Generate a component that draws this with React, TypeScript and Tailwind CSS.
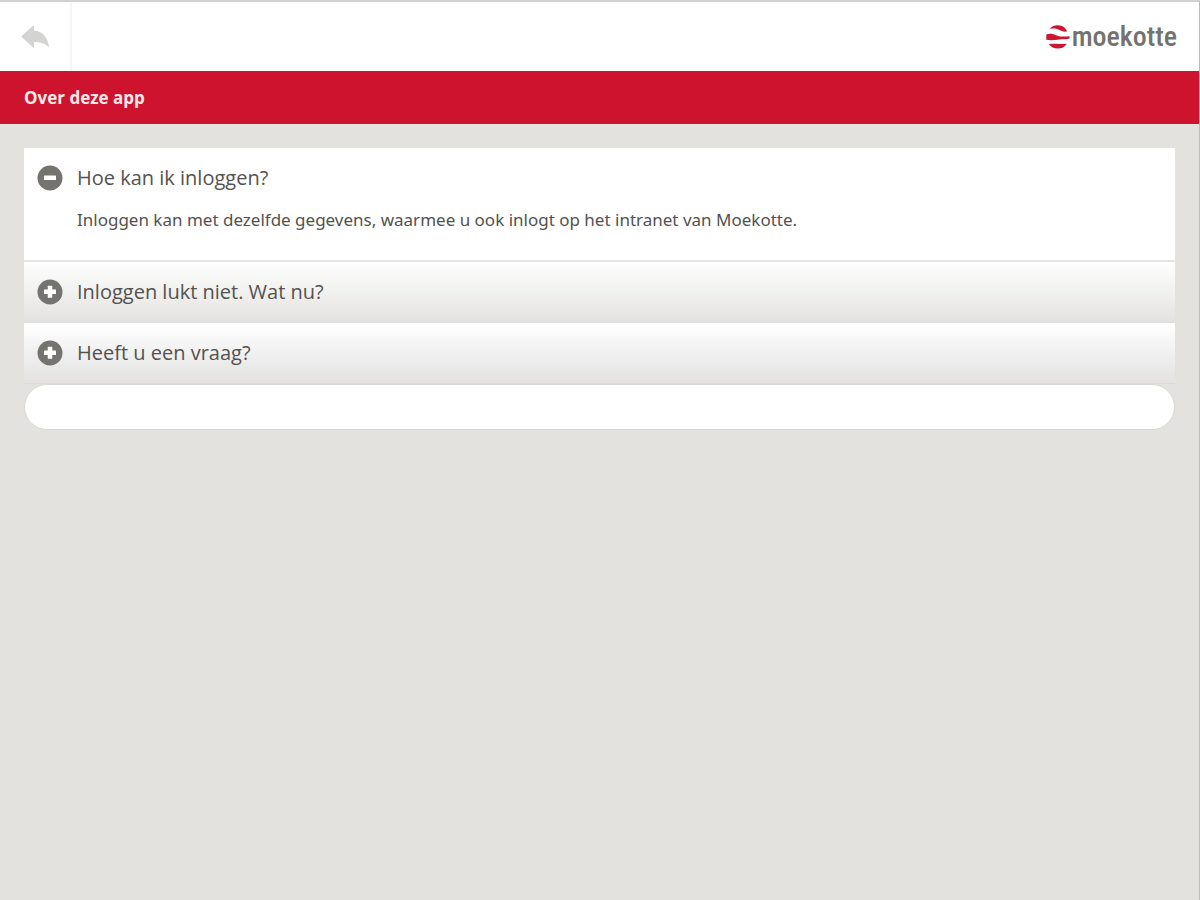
import { useState } from 'react';

const questions = [
  {
    id: 'inloggen',
    title: 'Hoe kan ik inloggen?',
    answer: 'Inloggen kan met dezelfde gegevens, waarmee u ook inlogt op het intranet van Moekotte.',
  },
  {
    id: 'lukt-niet',
    title: 'Inloggen lukt niet. Wat nu?',
    answer: 'Controleer uw gebruikersnaam en wachtwoord en probeer het opnieuw.',
  },
  {
    id: 'vraag',
    title: 'Heeft u een vraag?',
    answer: 'Neem dan contact op met Moekotte.',
  },
];

function BackIcon() {
  return (
    <svg width="28" height="24" viewBox="0 0 28 24" fill="#d3d4d1" aria-hidden="true">
      <path d="M0 11.500 13 0v5.500C21 6 27 12 28 22.500 24.500 18.500 19.500 17 13 17v6z" />
    </svg>
  );
}

function ToggleIcon({ open }: { open: boolean }) {
  return (
    <svg width="26" height="26" viewBox="0 0 26 26" className="shrink-0" aria-hidden="true">
      <circle cx="13" cy="13" r="12.500" fill="#757370" />
      <rect x="7" y="10.500" width="12" height="4.500" rx="0.500" fill="#fff" />
      {!open && <rect x="10.750" y="6.750" width="4.500" height="12" rx="0.500" fill="#fff" />}
    </svg>
  );
}

function Logo() {
  return (
    <a href="#home" className="flex items-center gap-0.5" aria-label="moekotte">
      <svg width="24" height="24" viewBox="0 0 24 24" fill="#cd1430" aria-hidden="true">
        <path d="M3.500 3.800C6 1.200 9 .2 12 .3c4.500.2 7.800 2.400 9 6.200-3 .5-5.500-.3-8-1.700-2.500-1.300-5.500-1.700-9.500-1z" />
        <path d="M.3 9.500C3 8.300 7 8.500 10 10.300c3 1.500 7 1.500 13.500.9v2.600c-4 .6-7 .4-10 .7-5 .6-9 .9-13.200.3z" />
        <path d="M2.800 19.300c3-.6 6-.6 9-.4 3 .2 6 .2 9-.2-2 3.200-5 4.900-9 4.900-3.800 0-7-1.500-9-4.300z" />
      </svg>
      <span className="font-['Roboto_Condensed','Liberation_Sans_Narrow',sans-serif] text-[28px] leading-8 font-medium text-[#74726d]">
        moekotte
      </span>
    </a>
  );
}

export default function App() {
  const [openId, setOpenId] = useState('inloggen');

  return (
    <div className="min-h-screen border-t-2 border-r border-t-[#d2d2d2] border-r-[#bcbcba] bg-[#e3e2de] font-['Open_Sans',sans-serif] text-[#54524f]">
      <header className="flex h-[69px] items-center justify-between bg-white pr-[22px]">
        <button
          type="button"
          aria-label="Terug"
          className="flex h-full w-[72px] items-center justify-center border-r-2 border-[#f5f6f5]"
        >
          <BackIcon />
        </button>
        <Logo />
      </header>

      <div className="flex h-[53px] items-center bg-[#cd132e] px-6">
        <h1 className="text-[17px] leading-6 font-bold text-[#fbe9ea]">Over deze app</h1>
      </div>

      <main className="px-6 pt-6">
        {questions.map(({ id, title, answer }) => {
          const open = openId === id;
          return (
            <section
              key={id}
              className={
                open
                  ? 'border-b-2 border-[#e5e5e4] bg-white'
                  : 'border-b border-[#dcdbd9] bg-linear-to-b from-white to-[#e3e2e1]'
              }
            >
              <h2>
                <button
                  type="button"
                  aria-expanded={open}
                  aria-controls={id}
                  onClick={() => setOpenId(open ? '' : id)}
                  className="flex h-[60px] w-full items-center gap-[14px] px-[13px] text-left text-xl"
                >
                  <ToggleIcon open={open} />
                  {title}
                </button>
              </h2>
              {open && (
                <p id={id} className="pr-6 pb-7 pl-[53px] font-['Noto_Sans','Open_Sans',sans-serif] text-[17px] leading-6">
                  {answer}
                </p>
              )}
            </section>
          );
        })}

        <input
          type="text"
          aria-label="Uw vraag"
          className="block h-[46px] w-full rounded-full border border-[#d9d8d5] bg-white px-6 text-[17px] outline-none"
        />
      </main>
    </div>
  );
}
